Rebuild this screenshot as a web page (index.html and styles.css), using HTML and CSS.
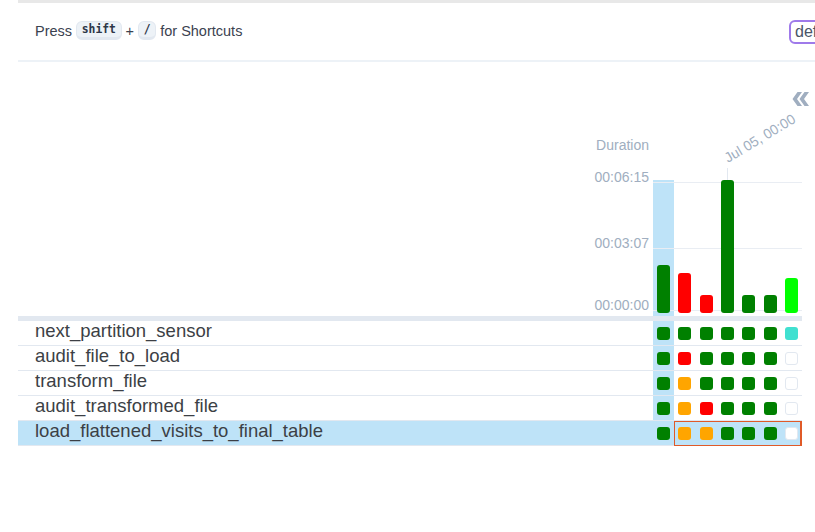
FILE: index.html
```html
<!DOCTYPE html>
<html>
<head>
<meta charset="utf-8">
<link rel="stylesheet" href="styles.css">
</head>
<body>
<div class="page">
  <div class="topbar"></div>
  <div class="header">
    <p class="hint">Press <kbd>shift</kbd> + <kbd>/</kbd> for Shortcuts</p>
    <div class="dagsel">def</div>
  </div>
  <div class="grid">
    <div class="head">
      <div class="axis">
        <span class="axis-title">Duration</span>
        <span class="tick t1">00:06:15</span>
        <span class="tick t2">00:03:07</span>
        <span class="tick t3">00:00:00</span>
      </div>
      <div class="chart">
        <svg class="collapse" viewBox="0 0 24 24" width="24" height="24"><path d="M15.5 5H11l5 7-5 7h4.5l5-7z"/><path d="M8.5 5H4l5 7-5 7h4.5l5-7z"/></svg>
        <span class="runlabel">Jul 05, 00:00</span>
        <span class="runtick"></span>
        <span class="gridline g1"></span>
        <span class="gridline g2"></span>
        <span class="gridline g3"></span>
        <div class="bars">
          <div class="col sel"><i class="bar green" style="height:48px"></i></div>
          <div class="col"><i class="bar red" style="height:40px"></i></div>
          <div class="col"><i class="bar red" style="height:18px"></i></div>
          <div class="col"><i class="bar green" style="height:133px"></i></div>
          <div class="col"><i class="bar green" style="height:18px"></i></div>
          <div class="col"><i class="bar green" style="height:18px"></i></div>
          <div class="col"><i class="bar lime" style="height:35px"></i></div>
        </div>
      </div>
    </div>
    <div class="band"></div>
    <div class="row">
      <div class="name">next_partition_sensor</div>
      <div class="cells">
        <span class="col sel"><i class="sq green"></i></span>
        <span class="col"><i class="sq green"></i></span>
        <span class="col"><i class="sq green"></i></span>
        <span class="col"><i class="sq green"></i></span>
        <span class="col"><i class="sq green"></i></span>
        <span class="col"><i class="sq green"></i></span>
        <span class="col"><i class="sq turq"></i></span>
      </div>
    </div>
    <div class="row">
      <div class="name">audit_file_to_load</div>
      <div class="cells">
        <span class="col sel"><i class="sq green"></i></span>
        <span class="col"><i class="sq red"></i></span>
        <span class="col"><i class="sq green"></i></span>
        <span class="col"><i class="sq green"></i></span>
        <span class="col"><i class="sq green"></i></span>
        <span class="col"><i class="sq green"></i></span>
        <span class="col"><i class="sq none"></i></span>
      </div>
    </div>
    <div class="row">
      <div class="name">transform_file</div>
      <div class="cells">
        <span class="col sel"><i class="sq green"></i></span>
        <span class="col"><i class="sq orange"></i></span>
        <span class="col"><i class="sq green"></i></span>
        <span class="col"><i class="sq green"></i></span>
        <span class="col"><i class="sq green"></i></span>
        <span class="col"><i class="sq green"></i></span>
        <span class="col"><i class="sq none"></i></span>
      </div>
    </div>
    <div class="row">
      <div class="name">audit_transformed_file</div>
      <div class="cells">
        <span class="col sel"><i class="sq green"></i></span>
        <span class="col"><i class="sq orange"></i></span>
        <span class="col"><i class="sq red"></i></span>
        <span class="col"><i class="sq green"></i></span>
        <span class="col"><i class="sq green"></i></span>
        <span class="col"><i class="sq green"></i></span>
        <span class="col"><i class="sq none"></i></span>
      </div>
    </div>
    <div class="row active">
      <div class="name">load_flattened_visits_to_final_table</div>
      <div class="cells">
        <span class="col sel"><i class="sq green"></i></span>
        <span class="col"><i class="sq orange"></i></span>
        <span class="col"><i class="sq orange"></i></span>
        <span class="col"><i class="sq green"></i></span>
        <span class="col"><i class="sq green"></i></span>
        <span class="col"><i class="sq green"></i></span>
        <span class="col"><i class="sq none"></i></span>
      </div>
      <span class="selbox"></span>
    </div>
  </div>
</div>
</body>
</html>
```
FILE: styles.css
```css
* { box-sizing: border-box; }
html, body { margin: 0; padding: 0; background: #fff; }
body {
  font-family: "Liberation Sans", Arial, sans-serif;
  overflow: hidden;
}
.page { padding-left: 18px; width: 860px; }
.topbar { height: 3px; background: #e8e8e8; }
.header {
  width: 821px;
  height: 59px;
  padding-left: 17px;
  border-bottom: 2px solid #edf2f7;
  display: flex;
  align-items: center;
  justify-content: space-between;
}
.hint {
  margin: 0 0 2px;
  font-size: 14.5px;
  line-height: 20px;
  color: #3b4250;
}
kbd {
  display: inline-block;
  vertical-align: middle;
  font-family: "DejaVu Sans Mono", "Liberation Mono", monospace;
  font-size: 11.4px;
  font-weight: bold;
  line-height: 15px;
  color: #2d3748;
  background: #edf2f7;
  border: 1px solid #e2e8f0;
  border-bottom-width: 3px;
  border-radius: 6px;
  padding: 0 4.6px;
  margin-top: -2px;
}
.dagsel {
  width: 50px;
  height: 24px;
  border: 2px solid #9f7aea;
  border-radius: 6px;
  padding-left: 4px;
  font-size: 16px;
  line-height: 20px;
  color: #4a5568;
}
.grid { width: 784px; }
.head { display: flex; height: 254px; }
.axis {
  width: 635px;
  display: flex;
  flex-direction: column;
  align-items: flex-end;
  padding: 75px 4px 0 0;
  color: #a0aec0;
  font-size: 14px;
  line-height: 16px;
}
.t1 { margin-top: 16px; }
.t2 { margin-top: 50px; }
.t3 { margin-top: 46px; }
.chart {
  width: 149px;
  position: relative;
  display: flex;
  align-items: flex-end;
}
.collapse {
  position: absolute;
  left: 136px;
  top: 25px;
  fill: #a0aec0;
  transform: scaleX(-1);
}
.runlabel {
  position: absolute;
  left: 75px;
  top: 88px;
  font-size: 14px;
  line-height: 16px;
  color: #a0aec0;
  white-space: nowrap;
  transform-origin: 0 13px;
  transform: rotate(-31deg);
}
.runtick {
  position: absolute;
  left: 74px;
  top: 106px;
  width: 1px;
  height: 14px;
  background: #e2e8f0;
}
.gridline {
  position: absolute;
  left: 0;
  right: 0;
  height: 1px;
  background: #e9edf3;
}
.g1 { top: 120px; }
.g2 { top: 186px; }
.g3 { top: 248px; }
.bars { display: flex; width: 100%; height: 136px; }
.col {
  flex: 1;
  display: flex;
  justify-content: center;
  align-items: flex-end;
  padding-bottom: 3px;
}
.col.sel { background: #bee3f8; }
.bar {
  display: block;
  width: 13px;
  border-radius: 3px;
  position: relative;
  z-index: 1;
}
.green { background: #008000; }
.red { background: #ff0000; }
.orange { background: #ffa500; }
.lime { background: #00ff00; }
.turq { background: #40e0d0; }
.band { height: 5px; background: #e2e8f0; }
.row {
  position: relative;
  display: flex;
  height: 25px;
  border-bottom: 1px solid #e2e8f0;
}
.row.active { background: #bee3f8; }
.name {
  width: 635px;
  padding-left: 17px;
  font-size: 18.5px;
  line-height: 20px;
  color: #3c3f45;
  white-space: nowrap;
}
.cells { width: 149px; display: flex; }
.cells .col { align-items: center; padding-bottom: 0; }
.sq {
  display: block;
  width: 13px;
  height: 13px;
  border-radius: 3px;
}
.sq.none { background: #fff; border: 1px solid #e2e8f0; }
.selbox {
  position: absolute;
  left: 656px;
  top: 0;
  width: 128px;
  height: 25px;
  border: 1px solid #e05a28;
  border-right-width: 2px;
}
```
